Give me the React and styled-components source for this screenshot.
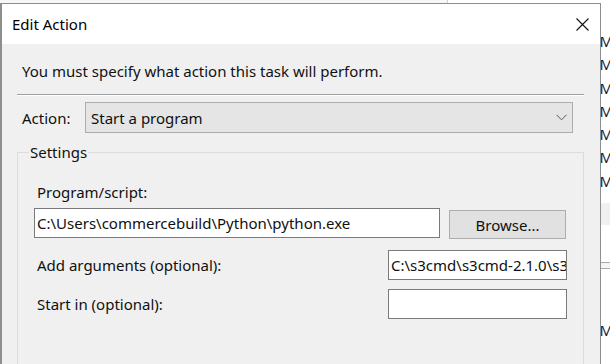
import React from "react";
import styled, { createGlobalStyle } from "styled-components";

const GlobalStyle = createGlobalStyle`
  html, body { margin: 0; padding: 0; background: #ffffff; overflow: hidden; }
  * { box-sizing: border-box; }
`;

const FONT = `"Noto Sans", "Open Sans", "Liberation Sans", sans-serif`;

const Desktop = styled.div`
  position: relative;
  width: 610px;
  height: 364px;
  overflow: hidden;
  background: #f7f7f7;
  font-family: ${FONT};
  font-size: 15px;
  color: #101010;
`;

const BackWindow = styled.div`
  position: absolute;
  left: 447px;
  top: 0;
  width: 170px;
  height: 364px;
  background: #ffffff;
  border-left: 1px solid #cfcfcf;
  padding-top: 30px;
  display: flex;
  flex-direction: column;
`;

const TimeCell = styled.div`
  height: 23.3px;
  line-height: 23.3px;
  text-align: right;
  padding-right: 4px;
  color: #1c1424;
  white-space: nowrap;
`;

const HeaderBand = styled.div`
  margin-top: 10px;
  height: 22px;
  background: #f0f0f0;
`;

const SplitLine = styled.div`
  margin-top: 37px;
  height: 7px;
  border-top: 1px solid #a8a8a8;
  border-bottom: 1px solid #a8a8a8;
  background: #f4f4f4;
`;

const Dialog = styled.div`
  position: absolute;
  left: 0;
  top: 3px;
  width: 601px;
  height: 400px;
  background: #f0f0f0;
  border: 1px solid #8e8e8e;
  border-left-width: 2px;
  display: flex;
  flex-direction: column;
`;

const TitleBar = styled.div`
  height: 40px;
  background: #ffffff;
  display: flex;
  align-items: center;
  padding-left: 10px;
  flex-shrink: 0;
`;

const Title = styled.div`
  flex: 1;
  font-size: 15px;
  color: #000;
`;

const CloseButton = styled.div`
  width: 13px;
  height: 13px;
  margin-right: 11px;
  display: flex;
  svg { display: block; }
`;

const Body = styled.div`
  padding: 0 16px 0 15px;
  display: flex;
  flex-direction: column;
`;

const Intro = styled.div`
  margin-top: 17px;
  padding-left: 5px;
  line-height: 20px;
`;

const Separator = styled.div`
  margin-top: 13px;
  height: 2px;
  border-top: 1px solid #a0a0a0;
  border-bottom: 1px solid #ffffff;
`;

const ActionRow = styled.div`
  margin-top: 6px;
  padding: 0 11px 0 5px;
  display: flex;
  align-items: center;
`;

const ActionLabel = styled.div`
  width: 63px;
  line-height: 20px;
`;

const Select = styled.div`
  flex: 1;
  height: 31px;
  background: #e5e5e5;
  border: 1px solid #adadad;
  display: flex;
  align-items: center;
  padding: 0 5px 0 5px;
  svg { display: block; }
`;

const SelectValue = styled.div`
  flex: 1;
`;

const GroupBox = styled.fieldset`
  margin: 9px 0 0 0;
  padding: 0 0 0 16px;
  border: 1px solid #dcdcdc;
  min-width: 0;
  height: 260px;
`;

const Legend = styled.legend`
  margin-left: -5px;
  padding: 0 1px;
  line-height: 20px;
  font-size: 15px;
`;

const FieldLabel = styled.div`
  padding-left: 3px;
  line-height: 20px;
  margin-top: ${(p) => p.$top || 0}px;
`;

const ProgramRow = styled.div`
  margin-top: 6px;
  display: flex;
  align-items: flex-start;
`;

const TextBox = styled.div`
  width: ${(p) => p.$w}px;
  height: 30px;
  background: #ffffff;
  border: 1px solid #7a7a7a;
  padding-left: 2px;
  line-height: 28px;
  overflow: hidden;
  white-space: nowrap;
  flex-shrink: 0;
`;

const Button = styled.div`
  margin: 2px 0 0 9px;
  width: 117px;
  height: 29px;
  background: #e1e1e1;
  border: 1px solid #adadad;
  display: flex;
  align-items: center;
  justify-content: center;
`;

const OptionRow = styled.div`
  margin-top: ${(p) => p.$top}px;
  display: flex;
  align-items: center;
`;

const OptionLabel = styled.div`
  width: 354px;
  padding-left: 3px;
  line-height: 20px;
`;

const times = ["AM", "AM", "PM", "PM", "AM", "AM", "AM"];

export default function App() {
  return (
    <>
      <GlobalStyle />
      <Desktop>
        <BackWindow>
          {times.map((t, i) => (
            <TimeCell key={i}>{t}</TimeCell>
          ))}
          <HeaderBand />
          <SplitLine />
          <TimeCell style={{ marginTop: "50px" }}>PM</TimeCell>
        </BackWindow>
        <Dialog>
          <TitleBar>
            <Title>Edit Action</Title>
            <CloseButton>
              <svg width="13" height="13" viewBox="0 0 13 13">
                <path d="M0.5 0.5 L12.5 12.5 M12.5 0.5 L0.5 12.5" stroke="#111" strokeWidth="1.1" fill="none" />
              </svg>
            </CloseButton>
          </TitleBar>
          <Body>
            <Intro>You must specify what action this task will perform.</Intro>
            <Separator />
            <ActionRow>
              <ActionLabel>Action:</ActionLabel>
              <Select>
                <SelectValue>Start a program</SelectValue>
                <svg width="11" height="7" viewBox="0 0 11 7">
                  <path d="M0.5 0.8 L5.5 5.8 L10.5 0.8" stroke="#555" strokeWidth="1" fill="none" />
                </svg>
              </Select>
            </ActionRow>
            <GroupBox>
              <Legend>Settings</Legend>
              <FieldLabel $top={20}>Program/script:</FieldLabel>
              <ProgramRow>
                <TextBox $w={406}>C:\Users\commercebuild\Python\python.exe</TextBox>
                <Button>Browse...</Button>
              </ProgramRow>
              <OptionRow $top={11}>
                <OptionLabel>Add arguments (optional):</OptionLabel>
                <TextBox $w={179}>C:\s3cmd\s3cmd-2.1.0\s3cmd</TextBox>
              </OptionRow>
              <OptionRow $top={9}>
                <OptionLabel>Start in (optional):</OptionLabel>
                <TextBox $w={179}></TextBox>
              </OptionRow>
            </GroupBox>
          </Body>
        </Dialog>
      </Desktop>
    </>
  );
}
